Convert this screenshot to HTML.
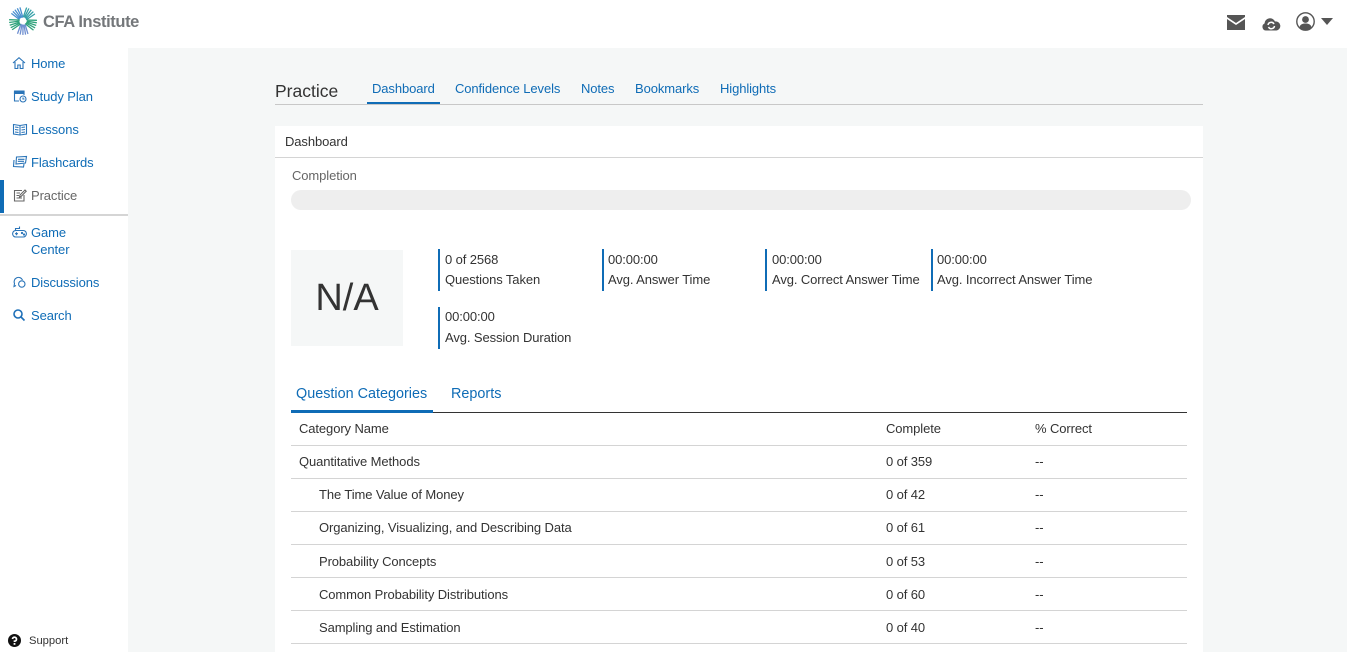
<!DOCTYPE html>
<html><head><meta charset="utf-8"><style>
html,body{margin:0;padding:0;width:1347px;height:652px;overflow:hidden;background:#f5f7f7;font-family:"Liberation Sans",Arial,sans-serif;font-size:13px;color:#333}
.a{position:absolute;white-space:nowrap;line-height:16px;letter-spacing:-.1px;margin-top:1px}
.l{color:#0f6cb6}
svg{position:absolute;overflow:visible}
.i{fill:none;stroke:#2a74b8;stroke-width:1.1}
.row{position:absolute;left:291px;width:896px;height:1px;background:#d4d4d4}
.bar{position:absolute;width:2px;height:42px;background:#0f6cb6}
.tab{font-size:14.4px;letter-spacing:0}
</style></head><body>
<div style="position:absolute;left:0;top:0;width:1347px;height:48px;background:#fff"></div>
<div style="position:absolute;left:0;top:48px;width:128px;height:604px;background:#fff"></div>
<svg style="left:9px;top:7px" width="28" height="28" viewBox="-14 -14 28 28">
<defs><clipPath id="c"><circle r="14"/></clipPath></defs>
<g fill="none" stroke-width="1.3" clip-path="url(#c)">
<g stroke="#4a90d0" transform="rotate(-28)"><path d="M-2.500-3-8-15M-1.500-3.500-5-15M-.5-3.500-2-15M.5-3.500 1-15M1.500-3 4-15"/></g>
<g stroke="#35a0a8" transform="rotate(44)"><path d="M-2.500-3-8-15M-1.500-3.500-5-15M-.5-3.500-2-15M.5-3.500 1-15M1.500-3 4-15"/></g>
<g stroke="#2fa37c" transform="rotate(116)"><path d="M-2.500-3-8-15M-1.500-3.500-5-15M-.5-3.500-2-15M.5-3.500 1-15M1.500-3 4-15"/></g>
<g stroke="#6f8fd0" transform="rotate(188)"><path d="M-2.500-3-8-15M-1.500-3.500-5-15M-.5-3.500-2-15M.5-3.500 1-15M1.500-3 4-15"/></g>
<g stroke="#2fa37c" transform="rotate(260)"><path d="M-2.500-3-8-15M-1.500-3.500-5-15M-.5-3.500-2-15M.5-3.500 1-15M1.500-3 4-15"/></g>
</g></svg>
<div class="a" style="left:43px;top:12px;margin-top:0;font-size:16.5px;line-height:20px;font-weight:bold;color:#74777a;letter-spacing:-.4px">CFA Institute</div>

<svg style="left:1227px;top:15px" width="18" height="15" viewBox="0 0 18 15"><path fill="#555" d="M0 0H18V2L9 8 0 2ZM0 4 9 10 18 4V15H0Z"/></svg>
<svg style="left:1262px;top:16px" width="18" height="15" viewBox="0 0 18 15"><path fill="#555" d="M4 14.500A3.700 3.700 0 0 1 2.500 7.500 5.500 5.500 0 0 1 13 5.500 4.500 4.500 0 0 1 14.500 14.500Z"/><path fill="none" stroke="#fff" stroke-width="1.500" d="M6 9A3.200 3.200 0 0 1 12 8M12.500 10A3.200 3.200 0 0 1 6.500 11"/></svg>
<svg style="left:1296px;top:12px" width="19" height="19" viewBox="0 0 19 19"><circle cx="9.500" cy="9.500" r="8.700" fill="#fff" stroke="#555" stroke-width="1.400"/><circle cx="9.500" cy="7.500" r="3.400" fill="#555"/><path fill="#555" d="M3.500 15.500C4 12 7 11.500 9.500 11.500S15 12 15.500 15.500A8.500 8.500 0 0 1 3.500 15.500Z"/></svg>
<svg style="left:1321px;top:18px" width="12" height="7" viewBox="0 0 12 7"><path fill="#555" d="M0 0H12L6 7Z"/></svg>

<svg class="i" style="left:13px;top:57px" width="12" height="12" viewBox="0 0 12 12"><path d="M0 6 6 .7 12 6M2 5V11.500H4.800V8H7.200V11.500H10V5"/></svg>
<div class="a l" style="left:31px;top:55px">Home</div>
<svg class="i" style="left:14px;top:90px" width="13" height="13" viewBox="0 0 13 13"><path d="M.5 1.500H10V5M.5 1.500V11H5"/><path d="M.5 1H10V3.500H.5Z" fill="#2a74b8"/><circle cx="9" cy="9" r="3"/><path d="M9 7.500V9H10.500"/></svg>
<div class="a l" style="left:31px;top:88px">Study Plan</div>
<svg class="i" style="left:13px;top:123px" width="14" height="12" viewBox="0 0 14 12"><path d="M.5 1.500 7 2.500 13.500 1.500V11L7 12 .5 11ZM7 2.500V12M2 4 5.500 4.500M2 6.500 5.500 7M2 9 5.500 9.500M8.500 4.500 12 4M8.500 7 12 6.500M8.500 9.500 12 9"/></svg>
<div class="a l" style="left:31px;top:121px">Lessons</div>
<svg class="i" style="left:13px;top:156px" width="14" height="12" viewBox="0 0 14 12"><path d="M3.500 1 13.500.5 12.500 7 3 8ZM1 4 .5 10.500 10.500 11 11 8M5 3.300H11.500M4.800 5.300H11"/></svg>
<div class="a l" style="left:31px;top:154px">Flashcards</div>
<div style="position:absolute;left:0;top:180px;width:4px;height:33px;background:#0f6cb6"></div>
<svg style="left:14px;top:189px;fill:none;stroke:#666;stroke-width:1.1" width="13" height="13" viewBox="0 0 13 13"><path d="M10 6V12H.5V1.500H8M2.500 4H6M2.500 6.500H5M2.500 9H8M5.500 8 6 6 11 1 12.200 2.200 7 7.500Z"/></svg>
<div class="a" style="left:31px;top:187px;color:#666">Practice</div>
<div style="position:absolute;left:0;top:214px;width:128px;height:2px;background:#d5d5d5"></div>
<svg class="i" style="left:12px;top:226px" width="15" height="12" viewBox="0 0 15 12"><rect x=".6" y="4.500" width="13.800" height="6.500" rx="3.200"/><path d="M3 7.700H6M4.500 6.200V9.200M3.500 4.500V2.500H7.500V.5"/><circle cx="10" cy="7" r=".6"/><circle cx="12" cy="8.500" r=".6"/></svg>
<div class="a l" style="left:31px;top:224px">Game</div>
<div class="a l" style="left:31px;top:241px">Center</div>
<svg class="i" style="left:13px;top:276px" width="13" height="12" viewBox="0 0 13 12"><path d="M3 9.500 1 10.500 1.500 7.500A4.200 4.200 0 1 1 9.500 4"/><circle cx="8.800" cy="8" r="3.200"/></svg>
<div class="a l" style="left:31px;top:274px">Discussions</div>
<svg style="left:13px;top:309px;fill:none;stroke:#1d6fb8;stroke-width:1.600" width="12" height="12" viewBox="0 0 12 12"><circle cx="5" cy="5" r="4"/><path d="M8 8 11.500 11.500"/></svg>
<div class="a l" style="left:31px;top:307px">Search</div>
<svg style="left:8px;top:634px" width="13" height="13" viewBox="0 0 13 13"><circle cx="6.500" cy="6.500" r="6.500" fill="#111"/><path fill="none" stroke="#fff" stroke-width="1.700" d="M4.500 5A2 2 0 1 1 6.500 7.200V8"/><rect x="5.600" y="9" width="1.800" height="1.800" fill="#fff"/></svg>
<div class="a" style="left:29px;top:632px;font-size:11.2px;letter-spacing:0;color:#333">Support</div>

<div class="a" style="left:275px;top:80px;margin-top:0;font-size:17.5px;line-height:22px;letter-spacing:0;color:#333">Practice</div>
<div style="position:absolute;left:275px;top:104px;width:928px;height:1px;background:#c8c8c8"></div>
<div style="position:absolute;left:367px;top:102px;width:73px;height:2px;background:#0f6cb6"></div>
<div class="a l" style="left:372px;top:80px">Dashboard</div>
<div class="a l" style="left:455px;top:80px">Confidence Levels</div>
<div class="a l" style="left:581px;top:80px">Notes</div>
<div class="a l" style="left:635px;top:80px">Bookmarks</div>
<div class="a l" style="left:720px;top:80px">Highlights</div>

<div style="position:absolute;left:275px;top:126px;width:928px;height:526px;background:#fff"></div>
<div style="position:absolute;left:275px;top:157px;width:928px;height:1px;background:#d4d4d4"></div>
<div class="a" style="left:285px;top:133px">Dashboard</div>
<div class="a" style="left:292px;top:167px;color:#666">Completion</div>
<div style="position:absolute;left:291px;top:190px;width:900px;height:20px;border-radius:10px;background:#eee"></div>
<div style="position:absolute;left:291px;top:250px;width:112px;height:96px;background:#f5f7f7"></div>
<div class="a" style="left:291px;top:277px;margin-top:0;width:112px;text-align:center;font-size:38px;line-height:42px;letter-spacing:0;color:#333">N/A</div>

<div class="bar" style="left:438px;top:249px"></div>
<div class="a" style="left:445px;top:251px">0 of 2568</div><div class="a" style="left:445px;top:271px">Questions Taken</div>
<div class="bar" style="left:602px;top:249px"></div>
<div class="a" style="left:608px;top:251px">00:00:00</div><div class="a" style="left:608px;top:271px">Avg. Answer Time</div>
<div class="bar" style="left:765px;top:249px"></div>
<div class="a" style="left:772px;top:251px">00:00:00</div><div class="a" style="left:772px;top:271px">Avg. Correct Answer Time</div>
<div class="bar" style="left:931px;top:249px"></div>
<div class="a" style="left:937px;top:251px">00:00:00</div><div class="a" style="left:937px;top:271px">Avg. Incorrect Answer Time</div>
<div class="bar" style="left:438px;top:307px"></div>
<div class="a" style="left:445px;top:308px">00:00:00</div><div class="a" style="left:445px;top:329px">Avg. Session Duration</div>

<div class="a l tab" style="left:296px;top:385px">Question Categories</div>
<div class="a l tab" style="left:451px;top:385px">Reports</div>
<div style="position:absolute;left:291px;top:412px;width:896px;height:1px;background:#333"></div>
<div style="position:absolute;left:291px;top:410px;width:142px;height:3px;background:#0f6cb6"></div>

<div class="a" style="left:299px;top:420px">Category Name</div><div class="a" style="left:886px;top:420px">Complete</div><div class="a" style="left:1035px;top:420px">% Correct</div>
<div class="row" style="top:445px"></div>
<div class="a" style="left:299px;top:453px">Quantitative Methods</div><div class="a" style="left:886px;top:453px">0 of 359</div><div class="a" style="left:1035px;top:453px">--</div>
<div class="row" style="top:478px"></div>
<div class="a" style="left:319px;top:486px">The Time Value of Money</div><div class="a" style="left:886px;top:486px">0 of 42</div><div class="a" style="left:1035px;top:486px">--</div>
<div class="row" style="top:511px"></div>
<div class="a" style="left:319px;top:519px">Organizing, Visualizing, and Describing Data</div><div class="a" style="left:886px;top:519px">0 of 61</div><div class="a" style="left:1035px;top:519px">--</div>
<div class="row" style="top:544px"></div>
<div class="a" style="left:319px;top:553px">Probability Concepts</div><div class="a" style="left:886px;top:553px">0 of 53</div><div class="a" style="left:1035px;top:553px">--</div>
<div class="row" style="top:577px"></div>
<div class="a" style="left:319px;top:586px">Common Probability Distributions</div><div class="a" style="left:886px;top:586px">0 of 60</div><div class="a" style="left:1035px;top:586px">--</div>
<div class="row" style="top:610px"></div>
<div class="a" style="left:319px;top:619px">Sampling and Estimation</div><div class="a" style="left:886px;top:619px">0 of 40</div><div class="a" style="left:1035px;top:619px">--</div>
<div class="row" style="top:643px"></div>
</body></html>
